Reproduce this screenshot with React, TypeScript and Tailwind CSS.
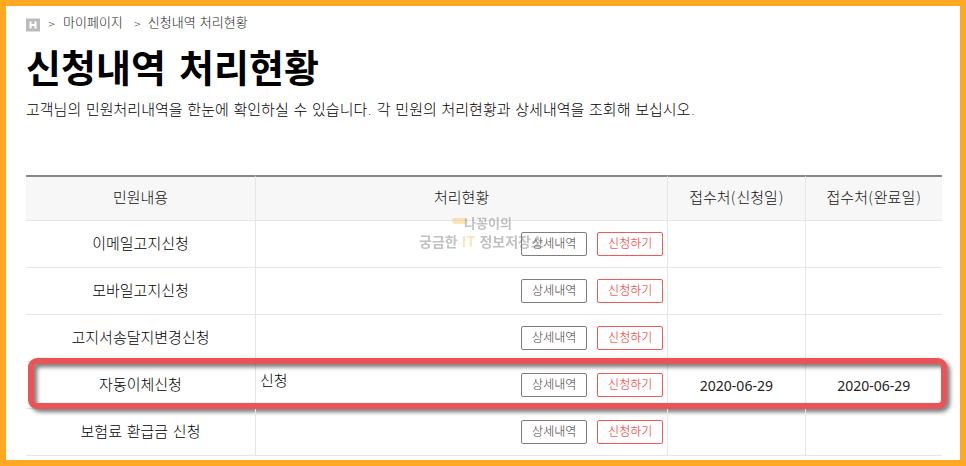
import clsx from 'clsx';

interface Application {
  name: string;
  status?: string;
  receivedAt?: string;
  completedAt?: string;
  highlighted?: boolean;
}

const applications: Application[] = [
  { name: '이메일고지신청' },
  { name: '모바일고지신청' },
  { name: '고지서송달지변경신청' },
  {
    name: '자동이체신청',
    status: '신청',
    receivedAt: '2020-06-29',
    completedAt: '2020-06-29',
    highlighted: true,
  },
  { name: '보험료 환급금 신청' },
];

const columns = [
  { label: '민원내용', width: 'w-[25%]' },
  { label: '처리현황', width: 'w-[45%]' },
  { label: '접수처(신청일)', width: 'w-[15%]' },
  { label: '접수처(완료일)', width: 'w-[15%]' },
];

function HomeIcon() {
  return (
    <svg viewBox="0 0 14 14" className="w-[14px] h-[14px]" aria-hidden="true">
      <rect y="0.5" width="14" height="13" fill="#bbbbbb" />
      <path d="M4.5 3.5v7M9.5 3.5v7M4.5 7h5" stroke="#ffffff" strokeWidth="2" fill="none" />
    </svg>
  );
}

function Breadcrumb() {
  return (
    <nav className="flex items-center h-5 text-[13px] text-[#222222]">
      <a href="#home" aria-label="홈" className="pt-1">
        <HomeIcon />
      </a>
      <span className="w-[23px] pt-1 text-center text-[9px]">&gt;</span>
      <a href="#mypage">마이페이지</a>
      <span className="w-[25px] pt-1 pl-1 text-center text-[9px]">&gt;</span>
      <a href="#status">신청내역 처리현황</a>
    </nav>
  );
}

function ActionButton({ label, primary }: { label: string; primary?: boolean }) {
  return (
    <button
      type="button"
      className={clsx(
        'w-[66px] h-[24px] rounded-[2px] border bg-white text-[12px] leading-none',
        primary ? 'border-[#f25a5a] text-[#ee2020]' : 'border-[#857b7b] text-[#403939]'
      )}
    >
      {label}
    </button>
  );
}

function ApplicationRow({ item }: { item: Application }) {
  const cell = 'h-[47px] p-0 border-b border-[#e6e6e6]';

  return (
    <tr className="relative">
      <td className={clsx(cell, 'text-center')}>
        {item.name}
        {item.highlighted && (
          <span className="absolute left-[2px] -right-[5px] -top-1 bottom-0 rounded-[9px] border-[6px] border-[#ea5456] drop-shadow-[3px_3px_2px_rgba(0,0,0,0.55)] pointer-events-none" />
        )}
      </td>
      <td className={clsx(cell, 'border-l')}>
        <div className="flex items-center gap-[10px] px-1">
          <span className="flex-1 pb-2">{item.status}</span>
          <ActionButton label="상세내역" />
          <ActionButton label="신청하기" primary />
        </div>
      </td>
      <td className={clsx(cell, 'border-l text-center font-["Noto_Sans"] font-normal text-[14px] text-[#222222]')}>
        {item.receivedAt}
      </td>
      <td className={clsx(cell, 'border-l text-center font-["Noto_Sans"] font-normal text-[14px] text-[#222222]')}>
        {item.completedAt}
      </td>
    </tr>
  );
}

function Watermark() {
  return (
    <div className='absolute left-[393px] top-[39px] w-[126px] font-["Noto_Sans_CJK_KR",sans-serif] font-bold text-[#777777] opacity-45 pointer-events-none'>
      <div className="flex justify-center h-[18px] text-[13px] leading-[18px]">
        <span className="w-4 h-[6px] mt-1 -mr-1 rounded-full bg-[#ffc56b]" />
        나꽁이의
      </div>
      <div className="whitespace-nowrap text-[14px] leading-[18px]">
        궁금한 <span className="mx-px text-[#ffc56b]">IT</span> 정보저장소
      </div>
    </div>
  );
}

export default function App() {
  return (
    <div className='min-h-screen border-[6px] border-[#ffa824] bg-white pl-5 pr-[18px] font-["DejaVu_Sans","Noto_Sans_CJK_KR",sans-serif] font-light text-[15px] text-black'>
      <header className="pt-[7px]">
        <Breadcrumb />
        <h1 className="mt-[11px] text-[38px] leading-[50px] font-bold text-black">신청내역 처리현황</h1>
        <p className="mt-1 leading-6">
          고객님의 민원처리내역을 한눈에 확인하실 수 있습니다. 각 민원의 처리현황과 상세내역을 조회해 보십시오.
        </p>
      </header>

      <main className="relative mt-[53px]">
        <table className="w-full table-fixed border-separate border-spacing-0">
          <thead>
            <tr>
              {columns.map((col, i) => (
                <th
                  key={col.label}
                  scope="col"
                  className={clsx(
                    col.width,
                    'h-[46px] p-0 border-t-2 border-b border-t-[#888888] border-b-[#e6e6e6] bg-[#f7f7f7] font-light text-[#111111]',
                    i > 0 && 'border-l border-l-[#e6e6e6]'
                  )}
                >
                  {col.label}
                </th>
              ))}
            </tr>
          </thead>
          <tbody>
            {applications.map((item) => (
              <ApplicationRow key={item.name} item={item} />
            ))}
          </tbody>
        </table>
        <Watermark />
      </main>
    </div>
  );
}
